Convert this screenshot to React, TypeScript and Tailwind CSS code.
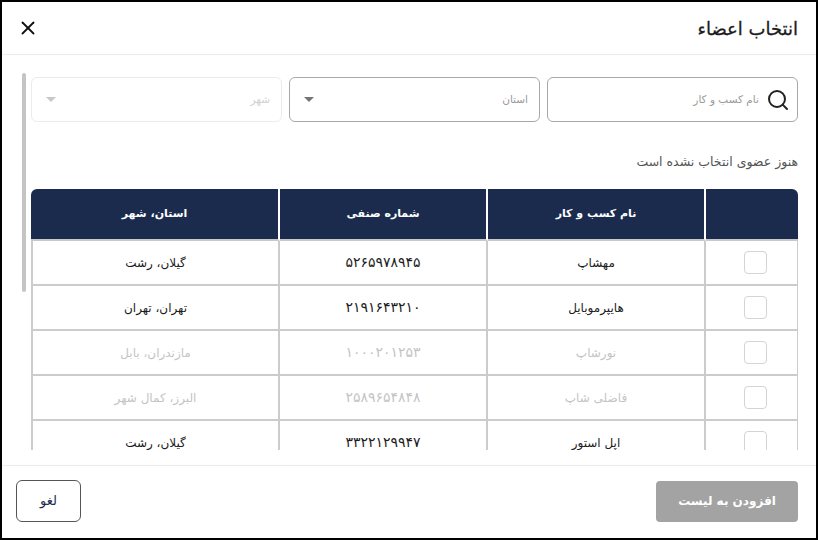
import { Search, X } from "lucide-react";

interface Member {
  name: string;
  code: string;
  place: string;
  disabled?: boolean;
}

const members: Member[] = [
  { name: "مهشاپ", code: "۵۲۶۵۹۷۸۹۴۵", place: "گیلان، رشت" },
  { name: "هایپرموبایل", code: "۲۱۹۱۶۴۳۲۱۰", place: "تهران، تهران" },
  { name: "نورشاپ", code: "۱۰۰۰۲۰۱۲۵۳", place: "مازندران، بابل", disabled: true },
  { name: "فاضلی شاپ", code: "۲۵۸۹۶۵۴۸۴۸", place: "البرز، کمال شهر", disabled: true },
  { name: "اپل استور", code: "۳۳۲۲۱۲۹۹۴۷", place: "گیلان، رشت" },
];

function Caret({ light }: { light?: boolean }) {
  return (
    <span
      className={`h-0 w-0 border-x-[5px] border-t-[5px] border-x-transparent ${
        light ? "border-t-[#c8c8c8]" : "border-t-[#757575]"
      }`}
    />
  );
}

export default function App() {
  return (
    <div
      dir="rtl"
      className="flex h-[540px] w-[818px] flex-col border-2 border-black bg-white text-[#1c1c1c] font-['DejaVu_Sans','Noto_Sans',sans-serif]"
    >
      <header className="flex h-[53px] shrink-0 items-center justify-between border-b border-[#ececec] pl-[15px] pr-[18px]">
        <h1 className="text-[18px] font-medium [-webkit-text-stroke:0.3px]">انتخاب اعضاء</h1>
        <X size={22} strokeWidth={2} className="text-[#111]" />
      </header>

      <main className="relative flex min-h-0 flex-1 flex-col pb-[15px]">
        <div className="absolute left-[20px] top-[18px] h-[219px] w-[4px] rounded-full bg-[#c4c4c4]" />
        <div className="min-h-0 flex-1 overflow-hidden pl-[29px] pr-[18px] pt-[22px]">
          <div className="grid h-[45px] grid-cols-3 gap-[7px] text-[10.5px]">
            <div className="flex items-center gap-[7px] rounded-[6px] border border-[#a8a8a8] pr-[7px]">
              <Search size={24} strokeWidth={2} className="text-[#222]" />
              <span className="pt-[1px] text-[#9a9a9a]">نام کسب و کار</span>
            </div>
            <div className="flex items-center justify-between rounded-[6px] border border-[#a8a8a8] pl-[14px] pr-[11px]">
              <span className="pt-[1px] text-[#9a9a9a]">استان</span>
              <Caret />
            </div>
            <div className="flex items-center justify-between rounded-[6px] border border-[#ececec] pl-[14px] pr-[11px]">
              <span className="pt-[1px] text-[#cfcfcf]">شهر</span>
              <Caret light />
            </div>
          </div>

          <p className="mt-[31px] h-[36px] text-[12.5px] leading-[18px] text-[#555]">هنوز عضوی انتخاب نشده است</p>

          <table className="w-[767px] table-fixed border-separate border-spacing-0 text-[12px]">
            <colgroup>
              <col className="w-[92px]" />
              <col className="w-[218px]" />
              <col className="w-[208px]" />
              <col className="w-[249px]" />
            </colgroup>
            <thead>
              <tr className="h-[52px] bg-[#1a2b4d] text-[11px] text-white">
                <th className="rounded-tr-[6px] border-b-2 border-[#c9c9c9]" />
                <th className="border-b-2 border-r-2 border-[#c9c9c9] border-r-white pt-[1px] font-bold">نام کسب و کار</th>
                <th className="border-b-2 border-r-2 border-[#c9c9c9] border-r-white pt-[1px] font-bold">شماره صنفی</th>
                <th className="rounded-tl-[6px] border-b-2 border-r-2 border-[#c9c9c9] border-r-white pt-[1px] font-bold">استان، شهر</th>
              </tr>
            </thead>
            <tbody>
              {members.map((m) => (
                <tr key={m.code} className={`h-[45px] ${m.disabled ? "text-[#c4c4c4]" : "text-[#1c1c1c]"}`}>
                  <td className="border-b-2 border-r border-[#cccccc]">
                    <span className="mr-[30px] block h-[23px] w-[23px] rounded-[4px] border border-[#d4d4d4]" />
                  </td>
                  <td className="border-b-2 border-r-2 border-[#cccccc] text-center">{m.name}</td>
                  <td className="border-b-2 border-r-2 border-[#cccccc] text-center text-[14px]">{m.code}</td>
                  <td className="border-b-2 border-x-2 border-[#cccccc] text-center">{m.place}</td>
                </tr>
              ))}
            </tbody>
          </table>
        </div>
      </main>

      <footer className="flex h-[73px] shrink-0 items-center justify-between border-t border-[#ececec] pb-[2px] pl-[14px] pr-[18px]">
        <button className="flex h-[41px] w-[142px] items-center justify-center rounded-[4px] bg-[#a3a3a3] text-[12px] font-bold text-white">
          افزودن به لیست
        </button>
        <button className="flex h-[42px] w-[65px] items-center justify-center rounded-[6px] border border-[#555] text-[13px] font-medium text-[#1c2b4a]">
          لغو
        </button>
      </footer>
    </div>
  );
}
